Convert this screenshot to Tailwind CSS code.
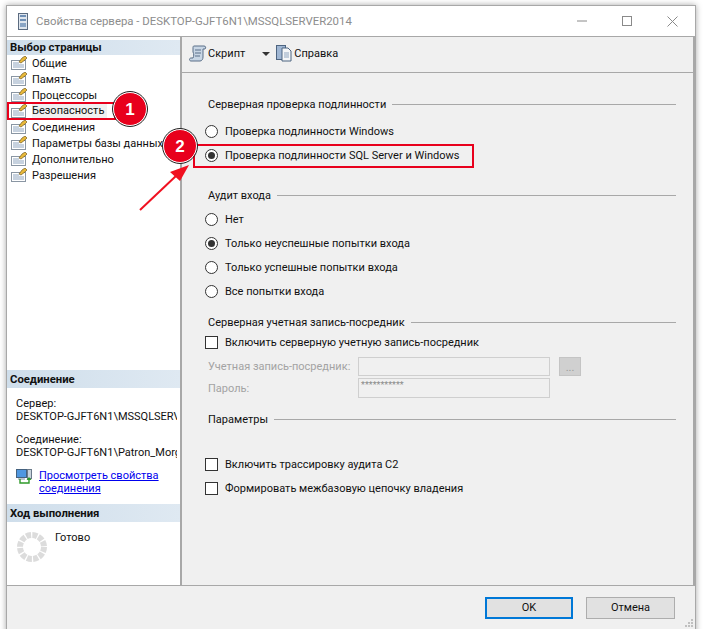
<!DOCTYPE html>
<html lang="ru">
<head>
    <meta charset="UTF-8">
    <title>Свойства сервера</title>
    <script src="https://cdn.jsdelivr.net/npm/@tailwindcss/browser@4"></script>
</head>
<body class="bg-white overflow-hidden">
<div class="relative w-[704px] h-[629px] overflow-hidden font-['Roboto',sans-serif] text-[11px] leading-[17px] text-[#111]">

    <!-- Window -->
    <div class="ml-[6px] mt-[5px] w-[690px] h-[640px] bg-[#f0f0f0] border border-[#a8a8a8] shadow-[0_0_6px_rgba(0,0,0,0.35)] flex flex-col">
        <!-- Title bar -->
        <div class="h-[31px] shrink-0 bg-white border-b border-[#a8a8a8] flex items-center pl-[10px]">
            <svg width="12" height="17" viewBox="0 0 12 17"><rect x="1.5" y="0.5" width="9" height="16" fill="#dfe6ee" stroke="#5b6b80"/><rect x="3" y="2" width="6" height="2" fill="#6f8fb5"/><rect x="3" y="6" width="6" height="2" fill="#6f8fb5"/><rect x="3" y="10" width="6" height="4" fill="#8aa5c5"/></svg>
            <span class="ml-[7px] text-[11.4px] text-[#8d8d8d]">Свойства сервера - DESKTOP-GJFT6N1\MSSQLSERVER2014</span>
            <div class="ml-auto flex items-center gap-[35px] pr-[17px]">
                <svg width="10" height="10" viewBox="0 0 10 10"><path d="M0 5h10" stroke="#8a8a8a"/></svg>
                <svg width="10" height="10" viewBox="0 0 10 10"><rect x="0.5" y="0.5" width="9" height="9" fill="none" stroke="#8a8a8a"/></svg>
                <svg width="11" height="11" viewBox="0 0 11 11"><path d="M0.5 0.5l10 10M10.5 0.5l-10 10" stroke="#8a8a8a"/></svg>
            </div>
        </div>

        <!-- Body -->
        <div class="flex h-[549px] shrink-0 border-b border-[#a8a8a8]">
            <!-- Sidebar -->
            <div class="w-[175px] shrink-0 bg-white border-r-2 border-[#a8a8a8] flex flex-col pt-[3px]">
                <div class="h-[15px] pl-[3px] bg-gradient-to-r from-[#cfdeeb] to-[#dfe9f2] font-bold text-[11.3px] flex items-center">Выбор страницы</div>
                <div class="flex flex-col pl-[4px]">
                    <div class="h-[16px] flex items-center gap-[4px]"><svg width="17" height="14" viewBox="0 0 17 14"><rect x="0.5" y="4.5" width="14" height="9" fill="#fff" stroke="#8a96a3"/><path d="M2 7h6M2 9h11M2 11h11" stroke="#8fa5bf"/><path d="M8 6l3-4 3-2 2 2-2 2-4 3z" fill="#e8b93a" stroke="#5c4510" stroke-width="0.6"/></svg><span>Общие</span></div>
                    <div class="h-[16px] flex items-center gap-[4px]"><svg width="17" height="14" viewBox="0 0 17 14"><rect x="0.5" y="4.5" width="14" height="9" fill="#fff" stroke="#8a96a3"/><path d="M2 7h6M2 9h11M2 11h11" stroke="#8fa5bf"/><path d="M8 6l3-4 3-2 2 2-2 2-4 3z" fill="#e8b93a" stroke="#5c4510" stroke-width="0.6"/></svg><span>Память</span></div>
                    <div class="h-[16px] flex items-center gap-[4px]"><svg width="17" height="14" viewBox="0 0 17 14"><rect x="0.5" y="4.5" width="14" height="9" fill="#fff" stroke="#8a96a3"/><path d="M2 7h6M2 9h11M2 11h11" stroke="#8fa5bf"/><path d="M8 6l3-4 3-2 2 2-2 2-4 3z" fill="#e8b93a" stroke="#5c4510" stroke-width="0.6"/></svg><span>Процессоры</span></div>
                    <div class="h-[16px] flex items-center gap-[4px]"><svg width="17" height="14" viewBox="0 0 17 14"><rect x="0.5" y="4.5" width="14" height="9" fill="#fff" stroke="#8a96a3"/><path d="M2 7h6M2 9h11M2 11h11" stroke="#8fa5bf"/><path d="M8 6l3-4 3-2 2 2-2 2-4 3z" fill="#e8b93a" stroke="#5c4510" stroke-width="0.6"/></svg><span class="bg-[#f0f0f0] pr-[3px] leading-[14px]">Безопасность</span></div>
                    <div class="h-[16px] flex items-center gap-[4px]"><svg width="17" height="14" viewBox="0 0 17 14"><rect x="0.5" y="4.5" width="14" height="9" fill="#fff" stroke="#8a96a3"/><path d="M2 7h6M2 9h11M2 11h11" stroke="#8fa5bf"/><path d="M8 6l3-4 3-2 2 2-2 2-4 3z" fill="#e8b93a" stroke="#5c4510" stroke-width="0.6"/></svg><span>Соединения</span></div>
                    <div class="h-[16px] flex items-center gap-[4px]"><svg width="17" height="14" viewBox="0 0 17 14"><rect x="0.5" y="4.5" width="14" height="9" fill="#fff" stroke="#8a96a3"/><path d="M2 7h6M2 9h11M2 11h11" stroke="#8fa5bf"/><path d="M8 6l3-4 3-2 2 2-2 2-4 3z" fill="#e8b93a" stroke="#5c4510" stroke-width="0.6"/></svg><span>Параметры базы данных</span></div>
                    <div class="h-[16px] flex items-center gap-[4px]"><svg width="17" height="14" viewBox="0 0 17 14"><rect x="0.5" y="4.5" width="14" height="9" fill="#fff" stroke="#8a96a3"/><path d="M2 7h6M2 9h11M2 11h11" stroke="#8fa5bf"/><path d="M8 6l3-4 3-2 2 2-2 2-4 3z" fill="#e8b93a" stroke="#5c4510" stroke-width="0.6"/></svg><span>Дополнительно</span></div>
                    <div class="h-[16px] flex items-center gap-[4px]"><svg width="17" height="14" viewBox="0 0 17 14"><rect x="0.5" y="4.5" width="14" height="9" fill="#fff" stroke="#8a96a3"/><path d="M2 7h6M2 9h11M2 11h11" stroke="#8fa5bf"/><path d="M8 6l3-4 3-2 2 2-2 2-4 3z" fill="#e8b93a" stroke="#5c4510" stroke-width="0.6"/></svg><span>Разрешения</span></div>
                </div>

                <!-- Connection -->
                <div class="mt-[187px] h-[18px] pl-[3px] bg-gradient-to-r from-[#cfdeeb] to-[#dfe9f2] font-bold text-[11.3px] flex items-center">Соединение</div>
                <div class="pl-[9px] pr-[3px] pt-[9px] leading-[13px] overflow-hidden whitespace-nowrap">
                    <div>Сервер:</div>
                    <div class="overflow-hidden">DESKTOP-GJFT6N1\MSSQLSERVER2014</div>
                    <div class="mt-[10px]">Соединение:</div>
                    <div class="overflow-hidden">DESKTOP-GJFT6N1\Patron_Morgan</div>
                </div>
                <div class="flex pl-[9px] pt-[10px]">
                    <svg width="17" height="15" viewBox="0 0 17 15"><rect x="0.5" y="0.5" width="10" height="8" fill="#4f97e0" stroke="#44627f"/><path d="M2 10h7" stroke="#7a8a9a"/><rect x="11.5" y="0.5" width="4" height="9" fill="#c9d3dc" stroke="#6a7a8a"/><path d="M4 10v4h9v-4" fill="none" stroke="#2f9a2a" stroke-width="1.4"/><path d="M10.5 11l2.5-3 2.5 3z" fill="#2f9a2a"/></svg>
                    <a href="#" class="ml-[6px] w-[125px] text-[#0000ee] underline leading-[13px]">Просмотреть свойства соединения</a>
                </div>

                <!-- Progress -->
                <div class="mt-[9px] h-[18px] pl-[3px] bg-gradient-to-r from-[#cfdeeb] to-[#dfe9f2] font-bold text-[11.3px] flex items-center">Ход выполнения</div>
                <div class="flex pl-[10px] pt-[8px]">
                    <svg class="mt-[2px]" width="30" height="30" viewBox="0 0 30 30"><circle cx="15" cy="15" r="12" fill="none" stroke="#dcdcdc" stroke-width="6" stroke-dasharray="5 1.28"/></svg>
                    <span class="ml-[8px] mt-[1px] leading-[14px]">Готово</span>
                </div>
            </div>

            <!-- Main -->
            <div class="flex-1 flex flex-col min-w-0 border-r-2 border-[#a8a8a8]">
                <div class="h-[36px] shrink-0 border-b border-[#a8a8a8] flex items-center pl-[7px] pb-[2px]">
                    <svg width="18" height="17" viewBox="0 0 18 17"><path d="M5 1h10c2 0 2 2 1 3h-2v8c0 2-1 4-3 4H2c-2 0-2-3 0-3h2c1-2 1-4 0-6V3c0-1 0-2 1-2z" fill="#c8d6e5" stroke="#5a6f88"/><path d="M6 5h6M6 8h6M6 11h5" stroke="#5a6f88"/></svg>
                    <span class="ml-[1px]">Скрипт</span>
                    <span class="ml-[17px] w-0 h-0 border-l-[4px] border-r-[4px] border-t-[4px] border-l-transparent border-r-transparent border-t-[#333]"></span>
                    <svg class="ml-[6px]" width="16" height="17" viewBox="0 0 16 17"><rect x="0.5" y="0.5" width="9" height="14" fill="#9fb6d3" stroke="#4d6480"/><path d="M6 3h6l3 3v10H6z" fill="#f4f6f8" stroke="#4d6480"/><path d="M8 8h5M8 10h5M8 12h5" stroke="#8fa5bf"/></svg>
                    <span class="ml-[2px]">Справка</span>
                </div>

                <div class="pl-[23px] pr-[17px] pt-[23px] flex flex-col">
                    <div class="h-[16px] flex items-center gap-[6px]"><span class="pl-[3px]">Серверная проверка подлинности</span><div class="flex-1 h-px bg-[#a8a8a8]"></div></div>
                    <label class="h-[24px] mt-[7px] flex items-center gap-[7px]"><span class="w-[13px] h-[13px] rounded-full border border-[#333] bg-white"></span>Проверка подлинности Windows</label>
                    <label class="h-[24px] flex items-center gap-[7px]"><span class="w-[13px] h-[13px] rounded-full border border-[#333] bg-white flex items-center justify-center"><span class="w-[7px] h-[7px] rounded-full bg-[#333]"></span></span>Проверка подлинности SQL Server и Windows</label>

                    <div class="h-[16px] mt-[20px] flex items-center gap-[6px]"><span class="pl-[3px]">Аудит входа</span><div class="flex-1 h-px bg-[#a8a8a8]"></div></div>
                    <label class="h-[24px] mt-[4px] flex items-center gap-[7px]"><span class="w-[13px] h-[13px] rounded-full border border-[#333] bg-white"></span>Нет</label>
                    <label class="h-[24px] flex items-center gap-[7px]"><span class="w-[13px] h-[13px] rounded-full border border-[#333] bg-white flex items-center justify-center"><span class="w-[7px] h-[7px] rounded-full bg-[#333]"></span></span>Только неуспешные попытки входа</label>
                    <label class="h-[24px] flex items-center gap-[7px]"><span class="w-[13px] h-[13px] rounded-full border border-[#333] bg-white"></span>Только успешные попытки входа</label>
                    <label class="h-[24px] flex items-center gap-[7px]"><span class="w-[13px] h-[13px] rounded-full border border-[#333] bg-white"></span>Все попытки входа</label>

                    <div class="h-[16px] mt-[11px] flex items-center gap-[6px]"><span class="pl-[3px]">Серверная учетная запись-посредник</span><div class="flex-1 h-px bg-[#a8a8a8]"></div></div>
                    <label class="h-[24px] flex items-center gap-[7px]"><span class="w-[13px] h-[13px] border border-[#333] bg-white"></span>Включить серверную учетную запись-посредник</label>
                    <div class="h-[20px] mt-[2px] flex items-center pl-[3px] text-[#a3a3a3]">
                        <span class="w-[150px]">Учетная запись-посредник:</span>
                        <div class="w-[192px] h-[19px] border border-[#cfcfcf]"></div>
                        <div class="ml-[9px] w-[22px] h-[19px] bg-[#d0d0d0] border border-[#c4c4c4] text-center leading-[20px] text-[#9a9a9a]">...</div>
                    </div>
                    <div class="h-[20px] mt-[2px] flex items-center pl-[3px] text-[#a3a3a3]">
                        <span class="w-[150px]">Пароль:</span>
                        <div class="w-[192px] h-[20px] border border-[#cfcfcf] px-[2px] text-[9px] leading-[12px] text-[#8a8a8a]">***********</div>
                    </div>

                    <div class="h-[16px] mt-[13px] flex items-center gap-[6px]"><span class="pl-[3px]">Параметры</span><div class="flex-1 h-px bg-[#a8a8a8]"></div></div>
                    <label class="h-[24px] mt-[25px] flex items-center gap-[7px]"><span class="w-[13px] h-[13px] border border-[#333] bg-white"></span>Включить трассировку аудита C2</label>
                    <label class="h-[24px] flex items-center gap-[7px]"><span class="w-[13px] h-[13px] border border-[#333] bg-white"></span>Формировать межбазовую цепочку владения</label>
                </div>
            </div>
        </div>

        <!-- Footer -->
        <div class="h-[43px] flex items-center justify-end pr-[20px] gap-[13px] relative">
            <button class="w-[88px] h-[22px] bg-[#e1e1e1] border-2 border-[#0078d7] leading-[18px]">OK</button>
            <button class="w-[89px] h-[22px] bg-[#e1e1e1] border border-[#adadad]">Отмена</button>
        </div>
    </div>

    <!-- Resize grip -->
    <svg class="absolute left-[684px] top-[618px]" width="10" height="10" viewBox="0 0 10 10"><path d="M7 1h2v2H7zM4 4h2v2H4zM7 4h2v2H7zM1 7h2v2H1zM4 7h2v2H4zM7 7h2v2H7z" fill="#c0c0c0"/></svg>

    <!-- Annotations -->
    <div class="absolute left-[7px] top-[102px] w-[109px] h-[18px] border-2 border-[#e8001c]"></div>
    <div class="absolute left-[193px] top-[144px] w-[281px] h-[24px] border-2 border-[#e8001c]"></div>
    <svg class="absolute left-0 top-0" width="704" height="629" viewBox="0 0 704 629"><path d="M140 210L177 175" stroke="#f01020" stroke-width="2"/><path d="M189 165l-19 7 10 9z" fill="#f01020"/></svg>
    <div class="absolute left-[113px] top-[92px] w-[34px] h-[34px] rounded-full bg-[#e8001c] border border-white outline-1 outline-[#222] flex items-center justify-center text-white font-bold text-[17px] font-['Liberation_Sans',sans-serif]">1</div>
    <div class="absolute left-[163px] top-[129px] w-[34px] h-[34px] rounded-full bg-[#e8001c] border border-white outline-1 outline-[#222] flex items-center justify-center text-white font-bold text-[17px] font-['Liberation_Sans',sans-serif]">2</div>
</div>
</body>
</html>
